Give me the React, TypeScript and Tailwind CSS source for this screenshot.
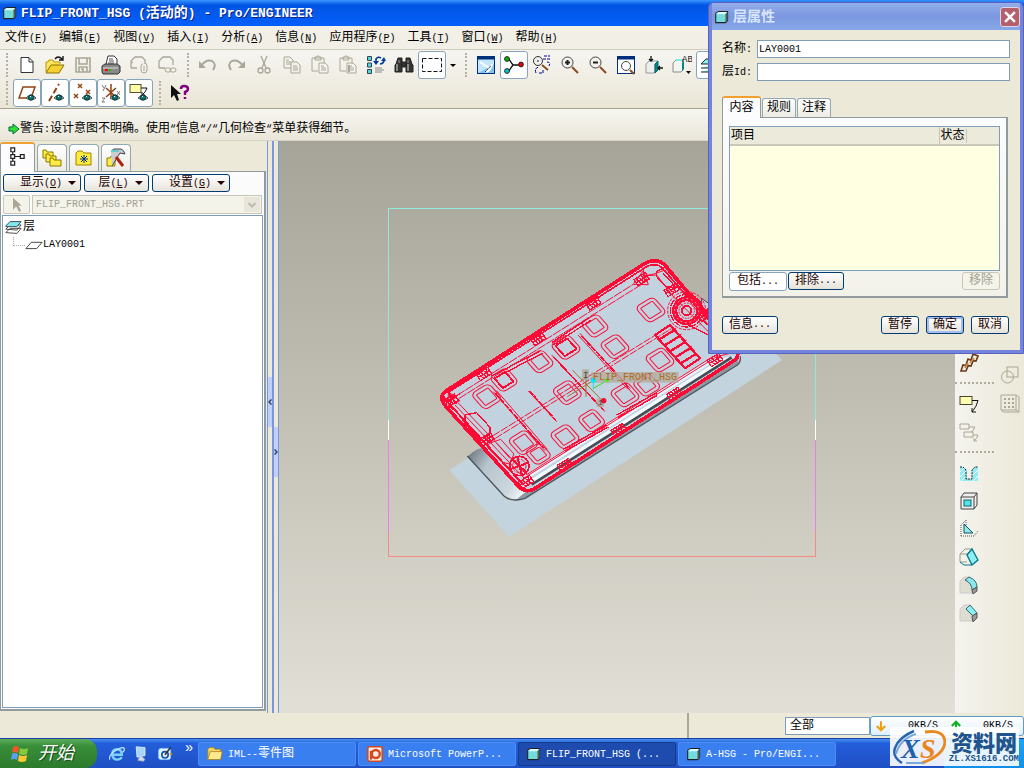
import type { ReactNode } from 'react';
import clsx from 'clsx';

const cjk = "font-['Liberation_Mono','Noto_Sans_CJK_SC',monospace]";

// Latin runs are set smaller so that two of them take the width of one Han character
function T({ children, big = false }: { children: string; big?: boolean }) {
  const runs = children.match(/[\x20-\x7e“]+|[^\x20-\x7e“]+/g) ?? [];
  return (
    <>
      {runs.map((run, i) => (
        <span key={i} className={clsx('whitespace-pre', /[\x20-\x7e“]/.test(run) && (big ? 'text-[13px]' : 'text-[10px]'))}>
          {run}
        </span>
      ))}
    </>
  );
}

function Label({ text, accel }: { text: string; accel: string }) {
  return (
    <span className="whitespace-nowrap">
      {text}
      <span className="text-[10px]">
        (<u>{accel}</u>)
      </span>
    </span>
  );
}

function Svg({ children, size = 20 }: { children: ReactNode; size?: number }) {
  return (
    <svg width={size} height={size} viewBox="0 0 20 20" fill="none" stroke="#222" strokeWidth="1" aria-hidden="true" className="shrink-0">
      {children}
    </svg>
  );
}

const Cube = ({ size = 14 }: { size?: number }) => (
  <Svg size={size}>
    <path d="M1 5L5 2H18V15L15 18H1Z" fill="#74dada" stroke="#222" strokeWidth="1.5" />
    <path d="M2 5L5 3H17L15 6H2Z" fill="#d8ffff" stroke="none" />
    <path d="M15 6L18 2V15L15 18Z" fill="#4c5c5c" stroke="none" />
  </Svg>
);

const Eye = () => (
  <g>
    <path d="M9 15Q14 9 19 15Q14 19 9 15Z" fill="#b8b8b0" stroke="#555" />
    <circle cx="14" cy="14.5" r="2.6" fill="#087878" stroke="#033" />
    <path d="M13 13.5h1" stroke="#fff" />
  </g>
);

const gray = '#aaa798';

const Clipboard = () => (
  <g stroke={gray}>
    <path d="M8 16H2V3H14V8M5 5V2H7V1H9V2H11V5Z" />
    <path d="M9 8H15L18 11V18H9Z" fill="#f6f5ef" />
    <path d="M11 11h3M11 13h5M11 15h5" />
  </g>
);

const Glass = () => (
  <g>
    <circle cx="7.5" cy="7.5" r="5.5" fill="#f2f1ec" stroke="#444" />
    <path d="M12 12L18 18" stroke="#8b4a20" strokeWidth="2" />
  </g>
);

const fileIcons: [string, ReactNode][] = [
  ['New', <path d="M4 2.5H12L16 6.5V17.5H4ZM12 3V7H16" fill="#fff" stroke="#333" />],
  ['Open', <g><path d="M1 17V7H3L4 5H8L9 7H15V9" fill="#ffe45c" stroke="#b59a00" /><path d="M1 18L6 10H19L14 18Z" fill="#f5d030" stroke="#8a7300" /><path d="M10 4Q13 0 17 4M18 1V5H14" stroke="#111" strokeWidth="1.4" /></g>],
  ['Save', <path d="M3 3H17V17H3ZM6 3V9H14V3M6 17V12H14V17M8 14h2v3" stroke={gray} strokeWidth="1.6" />],
  ['Print', <g><path d="M5 9L7 1H13L16 4V10" fill="#fff" stroke="#333" /><path d="M8 4h4M8 6h5M7 8h6" stroke="#555" /><path d="M1 11L4 9H16L19 11V17L17 19H2L1 17Z" fill="#888" stroke="#333" /><path d="M2 13H17" stroke="#ddd" /><path d="M4 15h3" stroke="#f00" strokeWidth="2" /><path d="M8 15h2" stroke="#0c0" strokeWidth="2" /></g>],
  ['Send', <g stroke={gray}><path d="M2 13V6L6 2H13L16 5V8M2 13H8M2 8L4 7" strokeWidth="1.3" /><path d="M15 8Q18 8 18 11V15Q18 18 15 18Q12 18 12 15V11Q12 9 14 9M15 11V16" /></g>],
  ['Send link', <g stroke={gray}><path d="M2 13V6L6 2H13L16 5V10M2 13H8" strokeWidth="1.3" /><rect x="8" y="13" width="6" height="4" rx="2" /><rect x="13" y="13" width="6" height="4" rx="2" /></g>],
];

const editIcons: [string, ReactNode][] = [
  ['Undo', <g><path d="M3 11Q8 4 14 6Q19 9 15 15" stroke={gray} strokeWidth="2" /><path d="M1 6L8 13H1Z" fill={gray} stroke="none" /></g>],
  ['Redo', <g><path d="M17 11Q12 4 6 6Q1 9 5 15" stroke={gray} strokeWidth="2" /><path d="M19 6L12 13H19Z" fill={gray} stroke="none" /></g>],
  ['Cut', <g stroke={gray} strokeWidth="1.3"><path d="M7 1L12 13M13 1L8 13" /><circle cx="6.5" cy="15.5" r="2.5" /><circle cx="13.5" cy="15.5" r="2.5" /></g>],
  ['Copy', <g stroke={gray}><path d="M2 2H8L11 5V13H2ZM4 5h3M4 7h5M4 9h5" /><path d="M9 7H15L18 10V18H9Z" fill="#f3f1e8" /><path d="M11 11h4M11 13h5M11 15h5" /></g>],
  ['Paste', <Clipboard />],
  ['Paste special', <g><Clipboard /><path d="M11 10v7" stroke={gray} strokeWidth="2" /></g>],
  ['Regenerate', <g><path d="M1.500 1.500h4v4h-4zM1.500 8h4v4h-4zM1.500 14.500h4v4h-4z" fill="#4fd8d8" stroke="#345" /><path d="M10 6V4Q12 1 15 3M18 5V6Q17 9 14 9" stroke="#003c9c" strokeWidth="1.6" /><path d="M7 6H13L10 10ZM15 6H20L18 2Z" fill="#003c9c" stroke="none" /><path d="M9 13h7M9 15h9M9 17h7" stroke="#888" /></g>],
  ['Find', <g fill="#333"><path d="M2 9L4 3H8V17H1V10Z" /><path d="M18 9L16 3H12V17H19V10Z" /><path d="M8 7H12V12H8Z" /><path d="M3 9V16M14 9V16" stroke="#ddd" /><path d="M5 5V8M14 5V8" stroke="#999" /></g>],
];

const viewIcons: [string, ReactNode][] = [
  ['Repaint', <g><rect x="1.5" y="1.5" width="17" height="17" fill="#c4e6fb" stroke="#00307c" /><path d="M1 3H19" stroke="#00307c" strokeWidth="3" /><path d="M2 18L18 9V18Z" fill="#85c3f0" stroke="none" /><path d="M4 7L15 14M10 17Q15 15 16 9" stroke="#fff" strokeWidth="2" /><path d="M9 17L15 11" stroke="#00307c" strokeDasharray="2 1" /></g>],
  ['Spin center', <g><path d="M4 3L9 10L4 17M9 10H17" stroke="#111" strokeWidth="1.3" /><circle cx="3" cy="4" r="2.4" fill="#0b0" /><circle cx="3" cy="16" r="2.4" fill="#0cc" /><circle cx="17" cy="9.5" r="2.4" fill="#e00" /></g>],
  ['Orient', <g><circle cx="6" cy="6" r="4.5" fill="#eee" stroke="#333" /><path d="M6 5v2" /><path d="M10 10L16 15" stroke="#8b4a20" strokeWidth="2" /><path d="M12 1h6M11 4h7M15 7Q19 7 17 11M4 18Q2 13 7 12M7 18H11V14" stroke="#0000a0" strokeDasharray="3 1" /></g>],
  ['Zoom in', <g><Glass /><path d="M5 7.5h5M7.5 5v5" strokeWidth="2" /></g>],
  ['Zoom out', <g><Glass /><path d="M5 7.5h5" strokeWidth="2" /></g>],
  ['Refit', <g><rect x="1.5" y="1.5" width="17" height="17" fill="#fff" stroke="#00307c" /><path d="M1 3H19" stroke="#00307c" strokeWidth="3" /><circle cx="10" cy="11" r="4.5" stroke="#444" /><path d="M14 15L18 19" stroke="#8b4a20" strokeWidth="2" /></g>],
  ['Reorient', <g><path d="M2 9L5 6H14L11 9V18H2Z" fill="#eee" stroke="#999" /><path d="M11 9L14 6V15L11 18Z" fill="#088" stroke="#066" /><path d="M7 1V6M5 4L7 6L9 4M19 13H14M16 11L14 13L16 15" stroke="#111" strokeWidth="1.3" /></g>],
];

const rightIcons: [string, ReactNode][] = [
  ['Annotation', <g><rect x="1" y="2.5" width="12" height="8" fill="#ffffb0" stroke="#443" /><path d="M13 6.500H19Q18 12 13 18M13 14V18H17" stroke="#111" /></g>],
  ['Annotation set', <g stroke={gray}><path d="M1 2h9v5h-9zM5 10h9v5h-9zM10 5h6l-3 5M14 13h5q-1 4-4 6v-3M15 19h3" /></g>],
];

const featureIcons: [string, ReactNode][] = [
  ['Hole', <g><path d="M1 4H5L8 7V16H13V7L16 4H19V18H1Z" fill="#8fecf4" stroke="none" /><path d="M1 9L6 4M1 14L8 7M2 18L8 12M14 12L19 7M14 18L19 13" stroke="#fff" /><path d="M1 4H4L7 7V16H13V7L16 4H19" stroke="#223" strokeDasharray="2 1" /></g>],
  ['Shell', <g><path d="M2 6L5 2H18V14L15 18H2ZM2 6H15V18M15 6L18 2" fill="#eee" stroke="#444" /><rect x="5" y="9" width="7" height="6" fill="#50e4ec" stroke="#166" /></g>],
  ['Rib', <g><path d="M2 17V6L7 1V8M2 17H15L19 12" stroke="#555" strokeDasharray="1 1" /><path d="M5 5V14H14Z" fill="#8eeaf0" stroke="#155" /></g>],
  ['Draft', <g><path d="M1 7L6 2H13L8 7ZM1 7V15H8" stroke="#9a9a8c" /><path d="M8 8L13 2L19 13L13 18Z" fill="#8eeef4" stroke="#078" strokeWidth="1.3" /><path d="M1 15L5 18H13" stroke="#078" /></g>],
  ['Round', <g><path d="M1 18V6L5 2H10L6 5Q13 8 13 14V18Z" fill="#deddd2" stroke="#ccc" /><path d="M6 5L10 2Q18 5 18 12L13 15Q13 8 6 5Z" fill="#86e8f0" stroke="#466" /><path d="M13 15L18 12V16L14 19Z" fill="#999" stroke="#555" /></g>],
  ['Chamfer', <g><path d="M1 18V6L5 2H11L7 6L13 13V18Z" fill="#deddd2" stroke="#ccc" /><path d="M7 6L11 2L18 10L14 13Z" fill="#86f0f4" stroke="#466" /><path d="M13 13L18 10V15L14 19Z" fill="#999" stroke="#555" /></g>],
];

const datumIcons: [string, ReactNode][] = [
  ['Planes', <g><path d="M2 15L6 4H18L14 15Z" stroke="#944010" strokeWidth="1.5" /><Eye /></g>],
  ['Axes', <g><path d="M4 18L14 1" stroke="#944010" strokeWidth="2" strokeDasharray="6 3" /><Eye /></g>],
  ['Points', <g><path d="M5 1l4 4m0-4l-4 4M1 11l4 4m0-4l-4 4M13 7l4 4m0-4l-4 4" stroke="#944010" strokeWidth="1.4" /><Eye /></g>],
  ['Coordinate systems', <g><path d="M1 2l2 3m2-3l-3 6M16 8l3 4m0-4l-3 4M1 15h3l-3 4h3" stroke="#777" /><path d="M10 1V16M5 5L15 14M15 5L5 14" stroke="#944010" strokeWidth="1.5" /><Eye /></g>],
  ['Annotations', <g><rect x="1" y="1.500" width="11" height="8" fill="#ffffa8" stroke="#553" /><path d="M12 5H18Q17 9 13 12M13 9V12H16" stroke="#111" /><Eye /></g>],
];

function ToolButton({ name, active, children }: { name: string; active?: boolean; children: ReactNode }) {
  return (
    <button
      type="button"
      aria-label={name}
      className={clsx('flex h-7 w-7 shrink-0 items-center justify-center rounded-[3px]', active && 'border border-[#86a4bc] bg-white')}
    >
      <Svg>{children}</Svg>
    </button>
  );
}

const Grip = () => (
  <span className="flex h-7 w-[13px] shrink-0 justify-center py-[2px]">
    <span className="w-0 border-l-2 border-dotted border-[#b4b2a4]" />
  </span>
);

function XpButton({ children, className, disabled }: { children: ReactNode; className?: string; disabled?: boolean }) {
  return (
    <button
      type="button"
      disabled={disabled}
      className={clsx(
        'flex h-[18px] items-center justify-center rounded-[3px] border bg-linear-to-b whitespace-nowrap',
        disabled ? 'border-[#c9c7ba] from-[#f5f4ea] to-[#f5f4ea] text-[#a1a192]' : 'border-[#003c74] from-white to-[#e6e3da] text-[#200]',
        className,
      )}
    >
      {children}
    </button>
  );
}

const Caret = () => <span className="border-x-4 border-t-4 border-x-transparent border-t-[#200]" />;

const menus = [
  ['文件', 'F'],
  ['编辑', 'E'],
  ['视图', 'V'],
  ['插入', 'I'],
  ['分析', 'A'],
  ['信息', 'N'],
  ['应用程序', 'P'],
  ['工具', 'T'],
  ['窗口', 'W'],
  ['帮助', 'H'],
];

function TopBars() {
  return (
    <header className="shrink-0">
      <div className="flex h-[26px] items-center gap-1 bg-linear-to-b from-[#3a93ff] via-[#0054e3] via-20% to-[#0560fb] pl-[3px] text-sm font-bold text-white [text-shadow:1px_1px_#0a1f8c]">
        <Cube />
        <h1 className="whitespace-nowrap">
          <T big>FLIP_FRONT_HSG (活动的) - Pro/ENGINEER</T>
        </h1>
      </div>
      <nav className="flex h-[23px] items-center gap-3 bg-[#f1efe6] pl-[5px]">
        {menus.map(([text, accel]) => (
          <button key={accel} type="button">
            <Label text={text} accel={accel} />
          </button>
        ))}
      </nav>
      <div className="h-[60px] overflow-hidden border-y border-t-[#d0cdbc] border-b-[#a6a290] bg-linear-to-b from-[#f6f5f1] to-[#eae6d6] pt-px">
        <div className="flex">
          <Grip />
          {fileIcons.map(([name, icon]) => (
            <ToolButton key={name} name={name}>{icon}</ToolButton>
          ))}
          <Grip />
          {editIcons.map(([name, icon]) => (
            <ToolButton key={name} name={name}>{icon}</ToolButton>
          ))}
          <ToolButton name="Select box" active>
            <rect x="0.500" y="3.500" width="19" height="13" stroke="#111" strokeDasharray="4 2" />
          </ToolButton>
          <span className="flex w-[13px] shrink-0 items-center justify-center"><span className="border-x-3 border-t-3 border-x-transparent border-t-black" /></span>
          <Grip />
          {viewIcons.map(([name, icon], i) => (
            <ToolButton key={name} name={name} active={i === 1}>{icon}</ToolButton>
          ))}
          <ToolButton name="Saved views">
            <path d="M1 8L4 5H11V15L9 17H1ZM4 5h8" fill="#f4f4f0" stroke="#888" />
            <path d="M10 8L12 6V14L10 16Z" fill="#088" stroke="none" />
            <path d="M4 5H10" stroke="#7ee" strokeWidth="2" />
            <text x="10" y="7" fontSize="9" fill="#222" stroke="none">AB</text>
            <path d="M14 16H19L16.500 19Z" fill="#111" stroke="none" />
          </ToolButton>
          <ToolButton name="Layers" active>
            <path d="M1 9L6 4H19L14 9ZM1 13H14L19 8M1 17H14L19 12" fill="#8ee" stroke="#222" />
          </ToolButton>
        </div>
        <div className="flex">
          <Grip />
          {datumIcons.map(([name, icon]) => (
            <ToolButton key={name} name={name} active>{icon}</ToolButton>
          ))}
          <Grip />
          <ToolButton name="Help">
            <path d="M1 2V15L4 12L7 18L9 17L7 11H11Z" fill="#111" stroke="none" />
            <path d="M11 6Q11 3 14 3Q18 3 18 6Q18 8 15 9V12M15 14V16" stroke="#800080" strokeWidth="2.4" />
          </ToolButton>
        </div>
      </div>
      <p className="flex h-8 items-center border-b border-[#d8d4c4] bg-linear-to-b from-[#f6f5f0] to-[#eae7d9] pt-2 pl-2">
        <svg width="12" height="12" viewBox="0 0 12 12" aria-hidden="true">
          <path d="M1 4H5V1L11 6L5 11V8H1Z" fill="#2de02d" stroke="#064" />
        </svg>
        <span className="whitespace-nowrap"><T>警告:设计意图不明确。使用“信息“/“几何检查“菜单获得细节。</T></span>
      </p>
    </header>
  );
}

const folder = <path d="M2 17V5L4 3H8L10 5H17V17Z" fill="#ffeb3a" stroke="#9a8500" />;

const treeTabs: [string, ReactNode][] = [
  ['Folders', <g fill="#ffec45" stroke="#8a7800"><path d="M1 10V2H4L5 4H11V10Z" /><path d="M4 14V6H7L8 8H14V14Z" /><path d="M8 18V10H11L12 12H19V18Z" /></g>],
  ['Favorites', <g>{folder}<path d="M10 7V15M6 11H14M7 8L13 14M13 8L7 14" stroke="#0030a0" /></g>],
  ['Connections', <g><path d="M1 18V10H4L5 8H9V18Z" fill="#ffec45" stroke="#8a7800" /><path d="M5 3L8 1H15Q18 2 19 6L14 5L6 18" fill="#ccc" stroke="#445" /><path d="M10 9L17 18" stroke="#b02010" strokeWidth="3" /><path d="M5 3h8" stroke="#6cc" strokeWidth="2" /></g>],
];

function LayerTree() {
  return (
    <aside className="flex w-[266px] shrink-0 flex-col pt-px pb-[2px]">
      <div className="relative z-10 -mb-px flex h-[30px] items-end gap-[2px]">
        <button type="button" aria-label="Model tree" className="flex h-[30px] w-[35px] items-center justify-center rounded-t-[3px] border-x border-t-2 border-x-[#919b9c] border-t-[#f0a030] bg-[#fcfcfe] pb-1">
          <Svg size={19}><path d="M3 1h4v4h-4zM3 8h4v4h-4zM3 15h4v4h-4zM13 8h4v4h-4zM5 5v3M5 12v3M7 10h6" strokeWidth="1.3" /></Svg>
        </button>
        {treeTabs.map(([name, icon]) => (
          <button key={name} type="button" aria-label={name} className="mb-px flex h-[27px] w-[30px] items-center justify-center rounded-t-[4px] border border-b-0 border-[#91a7b4] bg-linear-to-b from-white to-[#ecebe4]">
            <Svg>{icon}</Svg>
          </button>
        ))}
      </div>
      <div className="flex min-h-0 flex-1 flex-col border border-r-2 border-b-2 border-[#919b9c] bg-[#fbfbfc] p-px">
        <div className="flex gap-[3px] px-px pt-px">
          <XpButton className="w-[78px] gap-[6px] pl-3"><Label text="显示" accel="O" /><Caret /></XpButton>
          <XpButton className="w-[65px] gap-[6px] pl-2"><Label text="层" accel="L" /><Caret /></XpButton>
          <XpButton className="w-[78px] gap-[6px] pl-3"><Label text="设置" accel="G" /><Caret /></XpButton>
        </div>
        <div className="mt-[3px] flex gap-[2px] px-px">
          <button type="button" disabled aria-label="Pick" className="flex h-[19px] w-[27px] items-center justify-center rounded-[2px] border border-[#c9c7ba] bg-[#f4f3ea]">
            <Svg size={16}><path d="M5 1V16L9 12L13 19L15 17L12 11H16Z" fill={gray} stroke="none" /></Svg>
          </button>
          <div className="relative flex-1">
            <select disabled aria-label="Active model" className="block h-[19px] w-full appearance-none border border-[#c9c7ba] bg-[#f4f3ea] pl-[3px] text-[10px] text-[#a1a192] opacity-100">
              <option>FLIP_FRONT_HSG.PRT</option>
            </select>
            <span className="pointer-events-none absolute top-[2px] right-[2px] flex h-[15px] w-4 items-center justify-center bg-[#e8e6da]">
              <Svg size={10}><path d="M3 6L10 13L17 6" stroke="#bdbbad" strokeWidth="4" /></Svg>
            </span>
          </div>
        </div>
        <ul className="mt-px flex-1 border border-[#7f9db9] bg-white px-[2px] pt-[2px]">
          <li className="flex h-[18px] items-center gap-px">
            <Svg size={17}>
              <path d="M1 16L6 11H19L14 17ZM1 12L6 7H19L14 13Z" fill="#fff" stroke="#333" />
              <path d="M1 8L6 3H19L14 9H1Z" fill="#7ee8ee" stroke="#333" />
            </Svg>
            层
          </li>
          <li className="flex h-[18px] items-center">
            <span className="mb-2 ml-2 h-[9px] w-3 border-b border-l border-dotted border-[#aaa]" />
            <Svg size={18}><path d="M1 14L7 7H19L13 14Z" fill="#fff" stroke="#333" /></Svg>
            <span className="text-[10px]">LAY0001</span>
          </li>
        </ul>
      </div>
    </aside>
  );
}

function Sash() {
  return (
    <div className="flex w-[13px] shrink-0 pl-px">
      <div className="flex w-[6px] flex-col border-x border-[#7b96dc]">
        <div className="flex-1" />
        <button type="button" aria-label="Collapse tree" className="flex h-[50px] items-center justify-center bg-[#bfd0fb]">
          <svg width="4" height="6" viewBox="0 0 4 6" fill="none" stroke="#2c4468" strokeWidth="1.500" aria-hidden="true"><path d="M3.500 0.500L1 3L3.500 5.500" /></svg>
        </button>
        <div className="flex-1 pb-[50px]" />
      </div>
      <div className="flex w-[6px] flex-col border-x border-[#7b96dc]">
        <div className="flex-1 pt-[50px]" />
        <button type="button" aria-label="Expand tree" className="flex h-[50px] items-center justify-center bg-[#bfd0fb]">
          <svg width="4" height="6" viewBox="0 0 4 6" fill="none" stroke="#2c4468" strokeWidth="1.500" aria-hidden="true"><path d="M0.500 0.500L3 3L0.500 5.500" /></svg>
        </button>
        <div className="flex-1" />
      </div>
    </div>
  );
}

// bosses on the housing: x, y, half size, heavy outline
const bosses: [number, number, number, boolean][] = [
  [222, 390, 30, true], [170, 440, 32, false], [330, 335, 30, false], [408, 292, 32, true], [495, 228, 30, false],
  [555, 290, 32, false], [663, 180, 32, false], [690, 330, 32, false], [650, 405, 30, false], [585, 435, 32, false],
  [412, 428, 32, false], [485, 512, 30, false], [405, 560, 32, false], [280, 578, 32, false], [325, 612, 28, false],
];

// dense rib clusters along the rim
const clusters: [number, number][] = [
  [490, 160], [325, 267], [162, 372], [635, 88], [62, 452], [733, 432], [566, 540], [405, 645], [288, 696], [855, 330], [170, 568], [725, 120], [825, 195],
];

function Viewport() {
  return (
    <main className="min-w-0 flex-1 overflow-hidden bg-linear-to-b from-[#a6a498] to-[#e2dfd6]">
      <svg width="676" height="572" viewBox="279 141 676 572" fill="none" role="img" aria-label="FLIP_FRONT_HSG">
        <defs>
          <linearGradient id="nose" x1="110" y1="620" x2="290" y2="740" gradientUnits="userSpaceOnUse">
            <stop offset="0" stopColor="#6f7a82" />
            <stop offset="0.3" stopColor="#b9c5cd" />
            <stop offset="0.75" stopColor="#ccd8df" />
            <stop offset="1" stopColor="#fff" />
          </linearGradient>
        </defs>
        <g shapeRendering="crispEdges">
          <path d="M388.500 420V208.500H815.500V420" stroke="#8eeada" />
          <path d="M388.500 420V440M815.500 420V440" stroke="#fff" />
          <path d="M388.500 440V533M815.500 440V533" stroke="#ea80e4" />
          <path d="M388.500 533V556.500H815.500V533" stroke="#f48a84" />
        </g>
        <g transform="translate(430 250) scale(0.333333)">
          <path d="M58 660L237 860L1056 330L1000 270L400 440Z" fill="#c3d4df" />
          <path d="M815 145L850 170V220L815 200Z" fill="#c3d4df" stroke="#445" strokeWidth="3" />
          <path d="M112 620Q140 590 180 590L300 690L925 300L930 325L920 342L285 745Q250 760 225 742Z" fill="url(#nose)" />
          <path d="M300 715L925 320V342L285 745Q270 752 255 752Z" fill="#8b98a2" />
          <path d="M112 618L222 738Q245 758 285 745L922 345Q934 335 930 318" stroke="#4b555d" strokeWidth="4" />
          <path d="M40 430Q28 448 48 470L265 708Q288 732 315 715L915 330Q932 315 915 298L705 45Q680 22 645 40L60 415Q45 423 40 430Z" fill="#c2d2de" />
          <path d="M300 690L875 325L915 318L312 705Z" fill="#f4fcff" />
          <path d="M305 704L905 322" stroke="#444d52" strokeWidth="8" />
          <path d="M290 680L860 322" stroke="#e6f5fc" strokeWidth="14" />
          <g stroke="#ff0a35" shapeRendering="crispEdges" strokeLinejoin="round">
            <path d="M40 430Q28 448 48 470L265 708Q288 732 315 715L915 330Q932 315 915 298L705 45Q680 22 645 40L60 415Q45 423 40 430Z" strokeWidth="11" />
            <path d="M55 427L650 50Q680 36 697 55L835 210" strokeWidth="5" />
            <path d="M58 462L276 700" strokeWidth="6" />
            <path d="M80 437L610 103M86 446L640 100" strokeWidth="3" strokeDasharray="28 3" />
            <path d="M55 425V470L90 452ZM75 465L282 684L860 320L900 310M84 458L290 674L845 322M640 52V78L672 72L705 60L835 225" strokeWidth="3" />
            <path d="M610 103L640 62L655 104ZM640 78L680 75L730 140L835 245" strokeWidth="3" />
            <path d="M42 440L70 480M52 425L80 462M45 455L90 432M60 475L62 430" strokeWidth="4" />
            <path d="M190 425L345 602M200 422L352 598M295 423L380 515M365 315L525 485M450 250L600 415M444 255L594 418" strokeWidth="3" />
            <path d="M298 422L378 512M370 320L520 480M455 258L595 410M196 430L340 594" strokeWidth="5" strokeDasharray="18 3" />
            <path d="M165 572L720 228M172 580L724 236" strokeWidth="3" strokeDasharray="24 4" />
            <path d="M185 378L332 302M190 386L338 310M365 278L478 203M370 285L482 211M400 598L530 525M405 604L535 531M560 495L680 428M564 503L682 436" strokeWidth="4" />
            <path d="M105 495L140 488L180 532V552L152 572L105 520ZM95 505L145 572" strokeWidth="4" />
            <path d="M178 580L212 568L252 612L238 642L215 636L172 592ZM200 580L240 625" strokeWidth="3" />
            <path d="M680 65L705 52L745 100L735 115L705 108L680 80ZM700 70L730 103" strokeWidth="4" />
            {bosses.map(([x, y, r, heavy]) => (
              <g key={`${x}-${y}`} transform={`matrix(0.84 -0.52 0.66 0.75 ${x} ${y})`}>
                <rect x={-r} y={-r} width={r * 2} height={r * 2} rx="15" strokeWidth="3" />
                <rect x={-r + 11} y={-r + 11} width={r * 2 - 22} height={r * 2 - 22} rx="3" strokeWidth={heavy ? 6 : 3} />
              </g>
            ))}
            <path d="M675 255L720 225L810 325L765 355ZM688 268L734 240M704 286L750 258M720 304L766 276M736 322L782 294M752 340L798 312" strokeWidth="7" />
            <path d="M696 262L738 234M712 280L754 252M728 298L770 270M744 316L786 288" strokeWidth="3" />
            {clusters.map(([x, y]) => (
              <g key={`${x}-${y}`} transform={`matrix(0.84 -0.52 0.5 0.8 ${x} ${y})`} strokeWidth="4">
                <rect x="-20" y="-12" width="40" height="24" />
                <path d="M-14 -12L-8 12M-6 -12L2 12M4 -12L10 12M-20 0H20M14 -12L6 12" />
              </g>
            ))}
            <circle cx="770" cy="182" r="36" strokeWidth="15" />
            <circle cx="770" cy="182" r="36" strokeWidth="3" stroke="#c2d2de" strokeDasharray="5 9" />
            <circle cx="770" cy="182" r="57" strokeWidth="3" strokeDasharray="9 4" />
            <circle cx="770" cy="182" r="49" strokeWidth="4" strokeDasharray="20 4" />
            <circle cx="770" cy="182" r="23" strokeWidth="3" strokeDasharray="6 3" />
            <circle cx="770" cy="182" r="14" strokeWidth="6" />
            <path d="M775 225L835 255M785 130L835 190M800 200L835 225M805 165L835 200" strokeWidth="4" />
            <circle cx="268" cy="648" r="29" strokeWidth="5" />
            <circle cx="268" cy="648" r="20" strokeWidth="3" strokeDasharray="8 3" />
            <path d="M240 658L296 638M262 620L276 676M248 630L290 668" strokeWidth="6" />
          </g>
          <g strokeWidth="3">
            <path d="M427 360L520 455M412 440L500 385M468 360V440" stroke="#a0702c" />
            <path d="M490 395V418" stroke="#20e0f0" />
            <path d="M490 415L531 392" stroke="#30e020" />
          </g>
          <rect x="456" y="358" width="21" height="32" fill="#aaa698" fillOpacity="0.7" />
          <rect x="484" y="366" width="262" height="32" fill="#b4aca0" fillOpacity="0.8" />
          <rect x="500" y="445" width="22" height="26" fill="#aaa698" fillOpacity="0.7" />
          <circle cx="490" cy="391" r="8" fill="#10e4f4" />
          <circle cx="531" cy="391" r="6" fill="#40f020" />
          <circle cx="521" cy="452" r="8" fill="#f01035" />
        </g>
        <text x="593" y="380" fontSize="10" fill="#ae6c20">FLIP_FRONT_HSG</text>
        <text x="583" y="378" fontSize="9" fill="#554a38">I</text>
        <text x="598" y="405" fontSize="8" fill="#444">1</text>
      </svg>
    </main>
  );
}

const Dots = () => <span className="mt-[5px] mb-[6px] w-[39px] border-t-2 border-dotted border-[#b0ad9e]" />;

function FeatureBar() {
  return (
    <aside className="flex w-[69px] shrink-0 justify-between overflow-hidden bg-linear-to-r from-[#f4f3ee] to-[#ece9d8]">
      <div className="flex flex-col items-start pt-52">
        <ToolButton name="Chain">
          <path d="M2 18L4 12L9 13L7 18ZM7 12L9 6L14 8L12 13ZM12 7L14 1L19 3L17 8Z" stroke="#6a3a18" strokeWidth="1.6" />
          <path d="M6 15L9 10M11 10L15 5" stroke="#c08850" strokeWidth="2" />
        </ToolButton>
        <Dots />
        {rightIcons.map(([name, icon]) => (
          <ToolButton key={name} name={name}>{icon}</ToolButton>
        ))}
        <Dots />
        {featureIcons.map(([name, icon]) => (
          <ToolButton key={name} name={name}>{icon}</ToolButton>
        ))}
      </div>
      <div className="-ml-2 flex flex-col pt-48">
        <ToolButton name="Arc"><path d="M5 12Q9 18 14 12" stroke={gray} /></ToolButton>
        <ToolButton name="Trim">
          <rect x="7" y="2" width="11" height="10" stroke={gray} />
          <circle cx="7.500" cy="12" r="6" stroke={gray} />
        </ToolButton>
        <ToolButton name="Pattern">
          <path d="M1 2H16L19 4V19H3L1 17ZM16 2V17M1 17H16L19 19" stroke={gray} />
          <path d="M4 6H14M4 10H14M4 14H14" stroke={gray} strokeWidth="2" strokeDasharray="2 2" />
        </ToolButton>
      </div>
    </aside>
  );
}

function LayerDialog() {
  return (
    <section role="dialog" aria-label="层属性" className="absolute top-[2px] right-0 flex w-[316px] flex-col rounded-t-[6px] border border-[#5a62c0] bg-[#7284dc] px-[3px] pb-[3px]">
      <div className="flex h-[27px] items-center gap-1 bg-linear-to-b from-[#94aeea] via-[#7b97e0] to-[#87a8e8] pl-[3px]">
        <Cube />
        <h2 className="flex-1 text-sm font-bold text-[#d8e4f8]">层属性</h2>
        <button type="button" aria-label="Close" className="flex h-[20px] w-[20px] items-center justify-center rounded-[3px] border border-[#e4d4e4] bg-[#b4606c]">
          <Svg size={14}><path d="M3 3L17 17M17 3L3 17" stroke="#fff" strokeWidth="3.500" /></Svg>
        </button>
      </div>
      <form className="bg-[#ece9d8] px-[10px] pt-[10px] pb-4">
        <div className="grid grid-cols-[35px_1fr] items-center gap-y-[5px]">
          <label htmlFor="layer-name"><T>名称:</T></label>
          <input id="layer-name" defaultValue="LAY0001" className="h-[18px] w-full border border-[#7f9db9] bg-white px-px text-[10px]" />
          <label htmlFor="layer-id"><T>层Id:</T></label>
          <input id="layer-id" className="h-[18px] w-full border border-[#7f9db9] bg-white px-px text-[10px]" />
        </div>
        <div className="relative z-10 mt-[15px] -mb-px flex h-[22px] items-end gap-px">
          <button type="button" className="h-[22px] w-[39px] rounded-t-[3px] border-x border-t-2 border-x-[#919b9c] border-t-[#f0a030] bg-[#fcfcfe]">内容</button>
          <button type="button" className="mb-px h-[19px] w-[34px] rounded-t-[3px] border border-b-0 border-[#91a7b4] bg-linear-to-b from-white to-[#ecebe4]">规则</button>
          <button type="button" className="mb-px h-[19px] w-[34px] rounded-t-[3px] border border-b-0 border-[#91a7b4] bg-linear-to-b from-white to-[#ecebe4]">注释</button>
        </div>
        <div className="mr-[2px] border border-r-2 border-b-2 border-[#919b9c] bg-linear-to-b from-[#fcfcfe] to-[#f3f2ea] px-[6px] pt-2 pb-[5px]">
          <div className="h-[145px] border border-[#7f9db9] bg-[#ffffe1]">
            <table className="w-full table-fixed bg-[#ebeadb] text-left">
              <thead>
                <tr className="h-[18px] border-b-2 border-[#cbc7b8]">
                  <th className="py-0 pl-px font-normal leading-4">项目</th>
                  <th className="w-[60px] border-l border-[#c8c5b4] py-0 pl-px font-normal leading-4">
                    <span className="border-r border-[#c8c5b4] pr-px">状态</span>
                  </th>
                </tr>
              </thead>
            </table>
          </div>
          <div className="mt-px flex gap-px">
            <button type="button" className="h-[19px] w-[58px] rounded-[3px] border border-[#86a4bc] bg-white leading-4 text-[#200]"><T>包括...</T></button>
            <XpButton className="w-14"><T>排除...</T></XpButton>
            <XpButton disabled className="ml-auto w-[38px]">移除</XpButton>
          </div>
        </div>
        <div className="mt-[18px] mr-px flex gap-[7px]">
          <XpButton className="mr-auto w-14"><T>信息...</T></XpButton>
          <XpButton className="w-[38px]">暂停</XpButton>
          <XpButton className="w-[38px] shadow-[inset_0_0_0_2px_#a5bdf0]">确定</XpButton>
          <XpButton className="w-[38px]">取消</XpButton>
        </div>
      </form>
    </section>
  );
}

const tasks: [string, ReactNode, boolean][] = [
  ['IML--零件图', <Svg size={16}><path d="M1 17V4L3 2H8L10 4H17V8" fill="#f5d565" stroke="#a87c10" /><path d="M1 17L4 7H19L17 17Z" fill="#ffe98c" stroke="#a87c10" /></Svg>, false],
  ['Microsoft PowerP...', <Svg size={16}><rect x="1" y="1" width="18" height="18" rx="2" fill="#f6ece8" stroke="#d04a20" strokeWidth="2" /><circle cx="11" cy="10" r="5" stroke="#d8481c" strokeWidth="3" /><path d="M5 6V17" stroke="#d8481c" strokeWidth="3" /></Svg>, false],
  ['FLIP_FRONT_HSG (...', <Cube />, true],
  ['A-HSG - Pro/ENGI...', <Cube />, false],
];

function Taskbar() {
  return (
    <footer className="flex h-[30px] shrink-0 items-stretch border-t border-[#1941a5] bg-linear-to-b from-[#4a90f0] via-[#245edb] via-15% to-[#1f4fc4] text-white">
      <button type="button" className="flex w-[97px] shrink-0 items-center gap-2 rounded-r-xl bg-linear-to-b from-[#5bab5b] via-[#388e38] via-25% to-[#2d7a2d] pl-[10px] text-lg leading-5 italic [text-shadow:1px_1px_#1a4a1a]">
        <Svg size={20}>
          <g stroke="none">
            <path d="M3 3Q6 1 9 3L8 9Q5 7 2 9Z" fill="#f0592a" />
            <path d="M10 4Q14 6 18 4L17 10Q13 12 9 10Z" fill="#84c83c" />
            <path d="M2 10Q5 8 8 10L7 16Q4 14 1 16Z" fill="#58a0f0" />
            <path d="M9 11Q13 13 17 11L16 17Q12 19 8 17Z" fill="#fcc830" />
          </g>
        </Svg>
        开始
      </button>
      <div className="flex w-[101px] shrink-0 items-center gap-2 pl-3">
        <button type="button" aria-label="Internet Explorer">
          <Svg size={16}><path d="M4 11H16Q16 4 10 4Q4 4 4 11Q5 17 10 17Q14 17 16 14" stroke="#7cd0ff" strokeWidth="3" /><path d="M1 17Q-1 12 8 6Q17 0 19 3Q20 5 17 8" stroke="#c0e8ff" strokeWidth="1.500" /></Svg>
        </button>
        <button type="button" aria-label="Show desktop">
          <Svg size={16}><path d="M4 1L15 2V12L5 14Z" fill="#a8d4fc" stroke="#e8f4ff" /><path d="M8 14L6 18L13 19L15 17L11 13" fill="#d8dce8" stroke="#9ab" /></Svg>
        </button>
        <button type="button" aria-label="Mail">
          <Svg size={16}><rect x="2" y="3" width="15" height="14" rx="3" fill="#e4f2ff" stroke="#8cf" /><circle cx="10" cy="11" r="4" stroke="#1450b0" strokeWidth="2" /><path d="M10 11L17 2" stroke="#333" strokeWidth="2" /><path d="M16 10h3" stroke="#e80" strokeWidth="2" /></Svg>
        </button>
        <span className="mb-3 ml-1 text-sm leading-4">»</span>
      </div>
      <div className="flex min-w-0 flex-1 items-center gap-[2px]">
        {tasks.map(([name, icon, active]) => (
          <button
            key={name}
            type="button"
            className={clsx(
              'flex h-6 w-[158px] items-center gap-[5px] rounded-[2px] border pl-2 whitespace-nowrap',
              active ? 'border-[#163a8c] bg-[#1d4cae]' : 'border-[#4c8cf4] bg-[#3a7ff0]',
            )}
          >
            {icon}
            <span><T>{name}</T></span>
          </button>
        ))}
      </div>
      <div className="w-20 bg-linear-to-b from-[#1aa4f4] to-[#1290e8]" />
    </footer>
  );
}

function StatusBar() {
  return (
    <div className="flex h-[25px] shrink-0 items-center justify-end">
      <span className="mr-24 h-full border-l-2 border-[#aca899]" />
      <select aria-label="选择过滤器" className="h-[18px] w-[85px] appearance-none border border-[#7f9db9] bg-white pl-1 leading-4">
        <option>全部</option>
      </select>
      <div className="flex h-5 w-[154px] items-center rounded-[3px] border border-[#5c9ccc] bg-linear-to-b from-white to-[#e0f0fc] pr-[10px] pl-1 text-[10px] leading-[10px]">
        <Svg size={12}><path d="M10 2V17M3 10L10 17L17 10" stroke="#f0a010" strokeWidth="3.500" /></Svg>
        <span className="ml-auto">0KB/S</span>
        <span className="ml-3"><Svg size={12}><path d="M10 18V3M3 10L10 3L17 10" stroke="#10b020" strokeWidth="3.500" /></Svg></span>
        <span className="ml-auto">0KB/S</span>
      </div>
    </div>
  );
}

function Watermark() {
  return (
    <a href="#top" className="absolute right-[5px] bottom-[2px] flex h-[39px] w-[129px] items-end justify-end bg-white/90">
      <svg width="54" height="39" viewBox="0 0 54 39" fill="none" className="mr-[3px]" aria-hidden="true">
        <path d="M10 36Q0 30 3 21Q7 10 22 4" stroke="#2a66b0" strokeWidth="2.500" />
        <path d="M33 5Q52 2 53 15Q52 28 30 36" stroke="#e88a20" strokeWidth="3" />
        <path d="M4 27Q8 12 24 7M14 36H32" stroke="#7aa8d8" strokeWidth="2" />
        <text x="9" y="31" fontSize="28" fontStyle="italic" fontWeight="bold" fill="#1f5fae" fontFamily="Liberation Serif, serif">X</text>
        <text x="28" y="31" fontSize="28" fontStyle="italic" fontWeight="bold" fill="#e8861c" fontFamily="Liberation Serif, serif">S</text>
      </svg>
      <span className="flex flex-col items-center pb-[2px] text-[#20548c]">
        <span className="font-['Noto_Sans_CJK_SC',sans-serif] text-[22px] leading-[22px] font-black">资料网</span>
        <span className="mt-[2px] text-[9px] leading-[10px] font-bold">ZL.XS1616.COM</span>
      </span>
    </a>
  );
}

export default function App() {
  return (
    <div id="top" className={clsx('relative flex h-screen flex-col overflow-hidden bg-[#ece9d8] text-xs text-black', cjk)}>
      <TopBars />
      <div className="flex min-h-0 flex-1">
        <LayerTree />
        <Sash />
        <Viewport />
        <FeatureBar />
      </div>
      <StatusBar />
      <Taskbar />
      <LayerDialog />
      <Watermark />
    </div>
  );
}
